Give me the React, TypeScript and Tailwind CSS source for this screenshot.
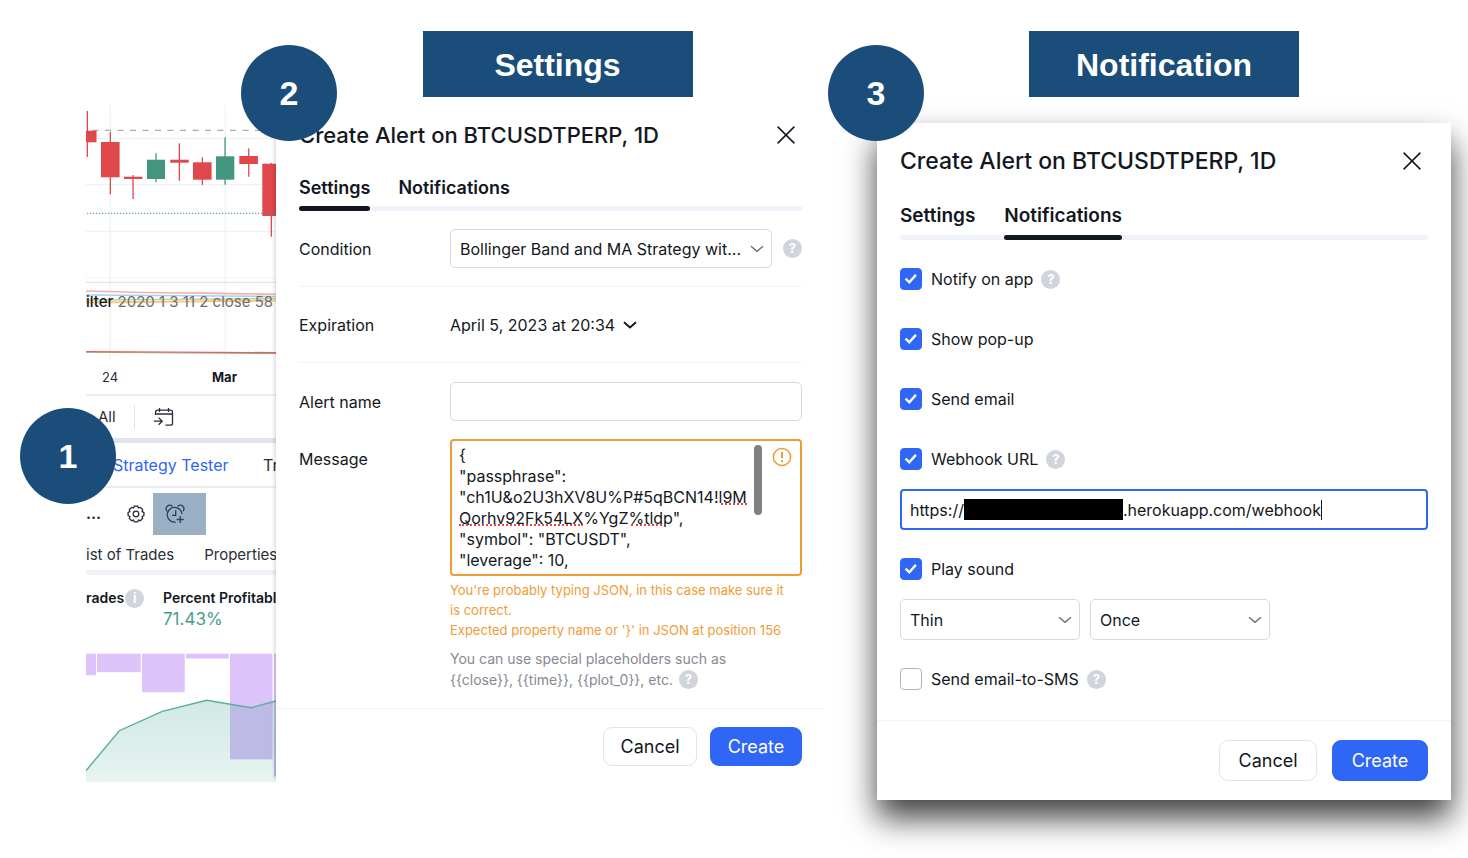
import { useState, type ReactNode } from "react";

interface Candle {
  x: number;
  w: number;
  top: number;
  bottom: number;
  high: number;
  low: number;
  wick: number;
  up?: boolean;
}

const CANDLES: Candle[] = [
  { x: 0, w: 10.5, top: 25.7, bottom: 37.3, high: 6, low: 52, wick: 1.3 },
  { x: 15, w: 18.6, top: 37, bottom: 72.3, high: 27, low: 89.3, wick: 24.3 },
  { x: 38, w: 18.3, top: 71.7, bottom: 74, high: 70, low: 94, wick: 47 },
  { x: 61, w: 18, top: 54.7, bottom: 74, high: 48.3, low: 77.3, wick: 70, up: true },
  { x: 84.3, w: 18.4, top: 54.7, bottom: 57.7, high: 38.3, low: 75.7, wick: 93.3 },
  { x: 107, w: 18.6, top: 57.3, bottom: 74.7, high: 52.3, low: 80, wick: 116.3 },
  { x: 130, w: 18.3, top: 51.3, bottom: 74.7, high: 32.3, low: 79.7, wick: 139, up: true },
  { x: 153.3, w: 18.6, top: 51, bottom: 59, high: 43.3, low: 71.7, wick: 162.7 },
  { x: 176.3, w: 14, top: 58.7, bottom: 111, high: 58, low: 131.7, wick: 185.3 },
];

const DRAWDOWN_BARS = [
  { x: 0, w: 10, h: 21.5 },
  { x: 11, w: 43.7, h: 18.5 },
  { x: 56, w: 42.7, h: 38.5 },
  { x: 100, w: 42.7, h: 4.8 },
  { x: 144, w: 42.4, h: 105.5 },
  { x: 188, w: 2, h: 122.5 },
];

const MESSAGE = `{
"passphrase":
"ch1U&o2U3hXV8U%P#5qBCN14!l9M
Qorhv92Fk54LX%YgZ%tldp",
"symbol": "BTCUSDT",
"leverage": 10,`;

const CONTROL = "border border-[#d6d9e1] rounded-[5px] bg-white text-[#131722]";

function StepBadge({ n, className }: { n: number; className: string }) {
  return (
    <div
      className={`absolute z-10 size-24 rounded-full bg-[#1b4d7b] text-white flex items-center justify-center font-['Liberation_Sans',sans-serif] font-bold text-[34px] ${className}`}
    >
      {n}
    </div>
  );
}

function Banner({ children }: { children: ReactNode }) {
  return (
    <h2 className="w-[270px] h-[66px] mx-auto bg-[#1b4d7b] text-white flex items-center justify-center pt-0.5 font-['Liberation_Sans',sans-serif] font-bold text-[32px]">
      {children}
    </h2>
  );
}

function Hint({ mark = "?" }: { mark?: string }) {
  return (
    <span className="size-[19px] shrink-0 rounded-full bg-[#d1d4dc] text-white inline-flex items-center justify-center text-[13px] leading-none font-bold">
      {mark}
    </span>
  );
}

function Chevron({ className = "" }: { className?: string }) {
  return (
    <svg viewBox="0 0 14 8" className={`w-[14px] h-2 ${className}`} fill="none" stroke="currentColor">
      <path d="M1 1.2l6 5.2 6-5.2" />
    </svg>
  );
}

function SelectBox({ id, label, value, className }: { id: string; label: string; value: string; className: string }) {
  return (
    <div className={`relative ${className}`}>
      <select id={id} aria-label={label} className={`appearance-none w-full h-full pl-[9px] pr-6 ${CONTROL}`}>
        <option>{value}</option>
      </select>
      <Chevron className="absolute right-2 top-1/2 -translate-y-1/2 pointer-events-none text-[#6a6d78] stroke-[1.4]" />
    </div>
  );
}

function DialogHeader({ titleClass }: { titleClass: string }) {
  return (
    <div className="flex items-center justify-between">
      <h3 className={`font-medium leading-7 text-[#131722] whitespace-nowrap ${titleClass}`}>
        Create Alert on BTCUSDTPERP, 1D
      </h3>
      <button aria-label="Close" className="w-8 h-7 flex items-center justify-center text-[#131722]">
        <svg viewBox="0 0 18 18" className="size-[18px]" fill="none" stroke="currentColor" strokeWidth="1.5">
          <path d="M.6.6l16.8 16.8M17.4.6L.6 17.4" />
        </svg>
      </button>
    </div>
  );
}

function Tabs({ active, tabClass }: { active: string; tabClass: string }) {
  return (
    <div role="tablist" className="relative flex">
      <div className="absolute inset-x-0 bottom-0 h-[5px] rounded-full bg-[#f0f3fa]" />
      {["Settings", "Notifications"].map((t) => (
        <button
          key={t}
          role="tab"
          aria-selected={t === active}
          className={`relative font-semibold leading-6 text-[#131722] ${tabClass}`}
        >
          {t}
          {t === active && <span className="absolute inset-x-0 bottom-0 h-[5px] rounded-full bg-[#131722]" />}
        </button>
      ))}
    </div>
  );
}

function CheckRow({ id, label, initial = true, hint = false }: { id: string; label: string; initial?: boolean; hint?: boolean }) {
  const [checked, setChecked] = useState(initial);
  return (
    <div className="flex items-center h-[60px]">
      <span className="relative size-[22px] shrink-0">
        <input
          id={id}
          type="checkbox"
          checked={checked}
          onChange={(e) => setChecked(e.target.checked)}
          className="block appearance-none size-[22px] rounded-[4px] border border-[#b2b5be] bg-white checked:bg-[#2f66f6] checked:border-[#2f66f6]"
        />
        {checked && (
          <svg viewBox="0 0 22 22" className="absolute inset-0 pointer-events-none" fill="none" stroke="white" strokeWidth="2.4">
            <path d="M5.6 10.6l3.7 3.7 6.6-7.4" />
          </svg>
        )}
      </span>
      <label htmlFor={id} className="ml-[9px] mr-2 text-[#131722]">
        {label}
      </label>
      {hint && <Hint />}
    </div>
  );
}

function PriceChart() {
  return (
    <div className="relative h-[257px] overflow-hidden">
      <svg viewBox="0 0 190 257" preserveAspectRatio="xMinYMin slice" className="w-full h-full">
        <g stroke="#f0f1f4" strokeWidth="1.2">
          <path d="M24.3 0V256M139.3 0V256M0 33.7H190M0 79.7H190M0 126.3H190M0 173H190" />
          <path d="M0 177.3H190" stroke="#e0e3eb" />
        </g>
        <path d="M6.5 25.3H190" stroke="#9598a1" strokeDasharray="6 6.5" />
        {CANDLES.map((c) => (
          <g key={c.wick} fill={c.up ? "#44967f" : "#e0484b"}>
            <rect x={c.wick - 0.6} y={c.high} width="1.3" height={c.low - c.high} />
            <rect x={c.x} y={c.top} width={c.w} height={c.bottom - c.top} />
          </g>
        ))}
        <path d="M1 108.3H190" stroke="#44967f" strokeDasharray="1.3 1.7" />
        <path d="M0 186C60 188 130 188 190 189.3" fill="none" stroke="#f3b0b0" strokeWidth="1.6" />
        <path d="M0 190L190 191.5" stroke="#a5d0f5" strokeWidth="1.5" />
        <path d="M0 195L190 193.5" stroke="#b9d8a8" strokeWidth="1.5" />
        <path d="M0 197.5L190 195.5" stroke="#f9c877" strokeWidth="2" />
        <path d="M0 247.3L190 248.6" stroke="#8ebd8c" />
        <path d="M0 246.6L190 247.7" stroke="#e2635f" strokeWidth="1.4" />
      </svg>
      <p className="absolute left-0 top-[187px] text-[15px] leading-5 text-[#6a6d78] whitespace-nowrap">
        <span className="font-medium text-[#131722]">ilter</span> 2020 1 3 11 2 close 58
      </p>
    </div>
  );
}

function EquityChart() {
  return (
    <svg viewBox="0 0 190 129" preserveAspectRatio="xMinYMin slice" className="w-full h-[129px] block">
      <defs>
        <linearGradient id="equity" x1="0" y1="0" x2="0" y2="1">
          <stop offset="0" stopColor="#4ca994" stopOpacity=".26" />
          <stop offset="1" stopColor="#4ca994" stopOpacity=".13" />
        </linearGradient>
      </defs>
      {DRAWDOWN_BARS.map((b) => (
        <rect key={b.x} x={b.x} y="0.7" width={b.w} height={b.h} fill="#dcc4fb" />
      ))}
      <path d="M0 117.7L33.3 77.7L76.3 58.3L120.7 47.3L165 54.7L190 48V129H0z" fill="url(#equity)" />
      <path d="M144 51.3L165 54.7L186.4 49V106.2H144zM188 48.6H190V123.2H188z" fill="#bdbbe5" />
      <path d="M0 117.7L33.3 77.7L76.3 58.3L120.7 47.3L165 54.7L190 48" fill="none" stroke="#5bae9c" strokeWidth="1.4" />
    </svg>
  );
}

function TradingPanel() {
  return (
    <section className="relative mt-[74px] text-[15px] text-[#2a2e39] whitespace-nowrap">
      <StepBadge n={1} className="-left-[66px] top-[303px]" />
      <div className="overflow-hidden">
        <PriceChart />
        <div className="flex h-8 items-center text-[13px] pl-4">
          <span className="w-[110px]">24</span>
          <span className="font-bold text-[#131722]">Mar</span>
        </div>
        <div className="flex items-center h-11 border-t-2 border-[#ebedf3] pl-3">
          <button>All</button>
          <span className="w-px h-6 ml-[18px] mr-[18px] bg-[#e0e3eb]" />
          <button aria-label="Go to date">
            <svg viewBox="0 0 22 20" className="w-[22px] h-5" fill="none" stroke="#2a2e39" strokeWidth="1.3">
              <path d="M2.5 8V5.2a2 2 0 0 1 2-2h13a2 2 0 0 1 2 2v11a2 2 0 0 1-2 2h-5M2.5 7h17M6.5 1v4M15.5 1v4M.8 14.2h8M5.6 10.6l3.6 3.6-3.6 3.6" />
            </svg>
          </button>
        </div>
        <div className="flex items-center h-[50px] border-t-[5px] border-b-2 border-t-[#e0e3eb] border-b-[#ebedf3] pl-[27px] text-base">
          <button className="w-[150px] shrink-0 text-left text-[#2f66f6]">Strategy Tester</button>
          <button>Tr</button>
        </div>
        <div className="flex items-center h-[52px]">
          <span className="w-[41px] font-bold">...</span>
          <button aria-label="Strategy settings">
            <svg viewBox="0 0 18 18" className="size-[18px]" fill="none" stroke="#2a2e39" strokeWidth="1.3">
              <path d="M7.3 1.2h3.4l.8 1.8 1.9-.6 2.3 2.3-.6 1.9 1.8.8v3.3l-1.8.8.6 1.9-2.3 2.3-1.9-.6-.8 1.8H7.3l-.8-1.8-1.9.6-2.3-2.3.6-1.9-1.8-.8V7.4l1.8-.8-.6-1.9 2.3-2.3 1.9.6z" />
              <circle cx="9" cy="9" r="2.8" />
            </svg>
          </button>
          <button aria-label="Add alert" className="ml-2 w-[53px] h-[42px] pl-3 bg-[#9bb0c5]">
            <svg viewBox="0 0 20 20" className="size-5" fill="none" stroke="#23405e" strokeWidth="1.3">
              <path d="M10.8 18.1A7.4 7.4 0 1 1 17 10.2M10.7 6.2v5.2H7M15.2 12v7M11.7 15.5h7" />
              <path d="M2 7.2A3.4 3.4 0 0 1 2.2 2.2A3.4 3.4 0 0 1 7.4 2.5M18 7.2a3.4 3.4 0 0 0-.2-5a3.4 3.4 0 0 0-5.2.3" />
            </svg>
          </button>
        </div>
        <div className="flex items-center h-[35px] gap-[30px] border-b-[5px] border-[#f0f3fa]">
          <button>ist of Trades</button>
          <button>Properties</button>
        </div>
        <div className="flex h-[78px] pt-3">
          <div className="flex items-center gap-px w-[77px] h-[22px] shrink-0 text-sm font-semibold text-[#131722]">
            rades
            <Hint mark="i" />
          </div>
          <div>
            <p className="text-sm leading-[22px] font-semibold text-[#131722]">Percent Profitabl</p>
            <p className="text-[17px] leading-5 text-[#4a9d88]">71.43%</p>
          </div>
        </div>
        <EquityChart />
      </div>
    </section>
  );
}

function SettingsDialog() {
  const [message, setMessage] = useState(MESSAGE);
  return (
    <div className="mt-2 bg-white shadow-[-4px_0_4px_-3px_rgba(0,0,0,0.18)] text-base text-[#131722]">
      <div className="px-[23px] pt-4 pb-[18px]">
        <DialogHeader titleClass="text-[22px]" />
        <div className="h-[27px]" />
        <Tabs active="Settings" tabClass="text-lg leading-6 pb-[11px] mr-7" />

        <div className="flex items-center py-[18px] border-b border-[#f0f3fa]">
          <label htmlFor="condition" className="w-[151px] shrink-0">Condition</label>
          <SelectBox
            id="condition"
            label="Condition"
            value="Bollinger Band and MA Strategy wit..."
            className="flex-1 h-[39px] mr-[11px]"
          />
          <Hint />
        </div>

        <div className="flex items-center h-[76px] border-b border-[#f0f3fa]">
          <span className="w-[151px] shrink-0">Expiration</span>
          <button className="flex items-center gap-2">
            April 5, 2023 at 20:34
            <Chevron className="stroke-2" />
          </button>
        </div>

        <div className="flex items-center pt-[19px] pb-[18px]">
          <label htmlFor="alert-name" className="w-[151px] shrink-0">Alert name</label>
          <input id="alert-name" className={`flex-1 min-w-0 h-[39px] px-[10px] ${CONTROL}`} />
        </div>

        <div className="flex">
          <label htmlFor="message" className="w-[151px] shrink-0 pt-2">Message</label>
          <div className="flex-1 min-w-0">
            <div className="relative">
              <textarea
                id="message"
                value={message}
                onChange={(e) => setMessage(e.target.value)}
                spellCheck={false}
                className="block w-full h-[137px] resize-none overflow-hidden whitespace-pre rounded-[4px] border-2 border-[#f09c36] pl-[7px] pr-12 py-1 leading-[21px]"
              />
              {/* spelling marks */}
              <span className="absolute left-[271px] top-[64px] w-[26px] border-b-2 border-dotted border-[#e0484b]" />
              <span className="absolute left-[9px] top-[85px] w-[124px] border-b-2 border-dotted border-[#e0484b]" />
              <span className="absolute left-[181px] top-[85px] w-[31px] border-b-2 border-dotted border-[#e0484b]" />
              <span className="absolute right-[40px] top-[6px] w-2 h-[70px] rounded-full bg-[#808080]" />
              <svg viewBox="0 0 20 20" className="absolute right-[10px] top-2 size-5" fill="none" stroke="#f09c36" strokeWidth="1.5">
                <circle cx="10" cy="10" r="8.6" />
                <path d="M10 5v6.2M10 13.2v2" strokeWidth="2" />
              </svg>
            </div>
            <div className="mt-1 text-[13px] leading-5 text-[#f09c36]">
              <p>
                You're probably typing JSON, in this case make sure it
                <br />
                is correct.
              </p>
              <p>Expected property name or '{"}"}' in JSON at position 156</p>
            </div>
            <p className="mt-2 text-sm leading-[21px] text-[#868993]">
              You can use special placeholders such as
              <br />
              <span className="flex items-center gap-[6px]">
                {"{{close}}, {{time}}, {{plot_0}}, etc."}
                <Hint />
              </span>
            </p>
          </div>
        </div>
      </div>

      <div className="flex justify-end gap-[13px] px-[23px] pt-[18px] pb-4 border-t border-[#f0f3fa] text-lg">
        <button className="w-[94px] h-[39px] rounded-[9px] border border-[#e0e3eb]">Cancel</button>
        <button className="w-[92px] h-[39px] rounded-[9px] bg-[#2f66f6] text-white">Create</button>
      </div>
    </div>
  );
}

function NotificationDialog() {
  return (
    <div className="mt-[26px] bg-white shadow-[0_18px_30px_rgba(0,0,0,0.75)] text-base text-[#131722]">
      <div className="px-[23px] pt-6 pb-[11px]">
        <DialogHeader titleClass="text-[23px]" />
        <div className="h-[29px]" />
        <Tabs active="Notifications" tabClass="text-[19px] pb-3 mr-[29px]" />

        <div className="pt-[9px]">
          <CheckRow id="notify-app" label="Notify on app" hint />
          <CheckRow id="popup" label="Show pop-up" />
          <CheckRow id="email" label="Send email" />
          <CheckRow id="webhook" label="Webhook URL" hint />
        </div>
        <div className="flex items-center h-[41px] pl-2 rounded-[4px] border-2 border-[#2f66f6]">
          <span>https://</span>
          <span className="w-[159px] h-[21px] bg-black" />
          <input
            aria-label="Webhook URL"
            defaultValue=".herokuapp.com/webhook"
            className="field-sizing-content outline-none"
          />
          <span className="w-px h-5 bg-[#131722]" />
        </div>
        <div className="pt-[9px]">
          <CheckRow id="sound" label="Play sound" />
        </div>
        <div className="flex gap-[10px]">
          <SelectBox id="sound-name" label="Sound" value="Thin" className="w-[180px] h-[41px]" />
          <SelectBox id="sound-repeat" label="Repeat" value="Once" className="w-[180px] h-[41px]" />
        </div>
        <div className="pt-[9px]">
          <CheckRow id="sms" label="Send email-to-SMS" initial={false} hint />
        </div>
      </div>

      <div className="flex justify-end gap-[15px] px-[23px] py-[19px] border-t border-[#f0f3fa] text-lg">
        <button className="w-[98px] h-[41px] rounded-[9px] border border-[#e0e3eb]">Cancel</button>
        <button className="w-24 h-[41px] rounded-[9px] bg-[#2f66f6] text-white">Create</button>
      </div>
    </div>
  );
}

export default function App() {
  return (
    <main className="min-h-screen overflow-hidden bg-white pt-[31px] pb-14 pl-[86px] pr-[17px] font-['Inter',sans-serif]">
      <div className="grid grid-cols-[minmax(0,190fr)_minmax(0,549fr)_minmax(0,626fr)] items-start">
        <TradingPanel />
        <section className="relative">
          <StepBadge n={2} className="-left-[35px] top-[14px]" />
          <div className="pl-[14px]">
            <Banner>Settings</Banner>
          </div>
          <SettingsDialog />
        </section>
        <section className="relative ml-[52px]">
          <StepBadge n={3} className="-left-[49px] top-[14px]" />
          <Banner>Notification</Banner>
          <NotificationDialog />
        </section>
      </div>
    </main>
  );
}
